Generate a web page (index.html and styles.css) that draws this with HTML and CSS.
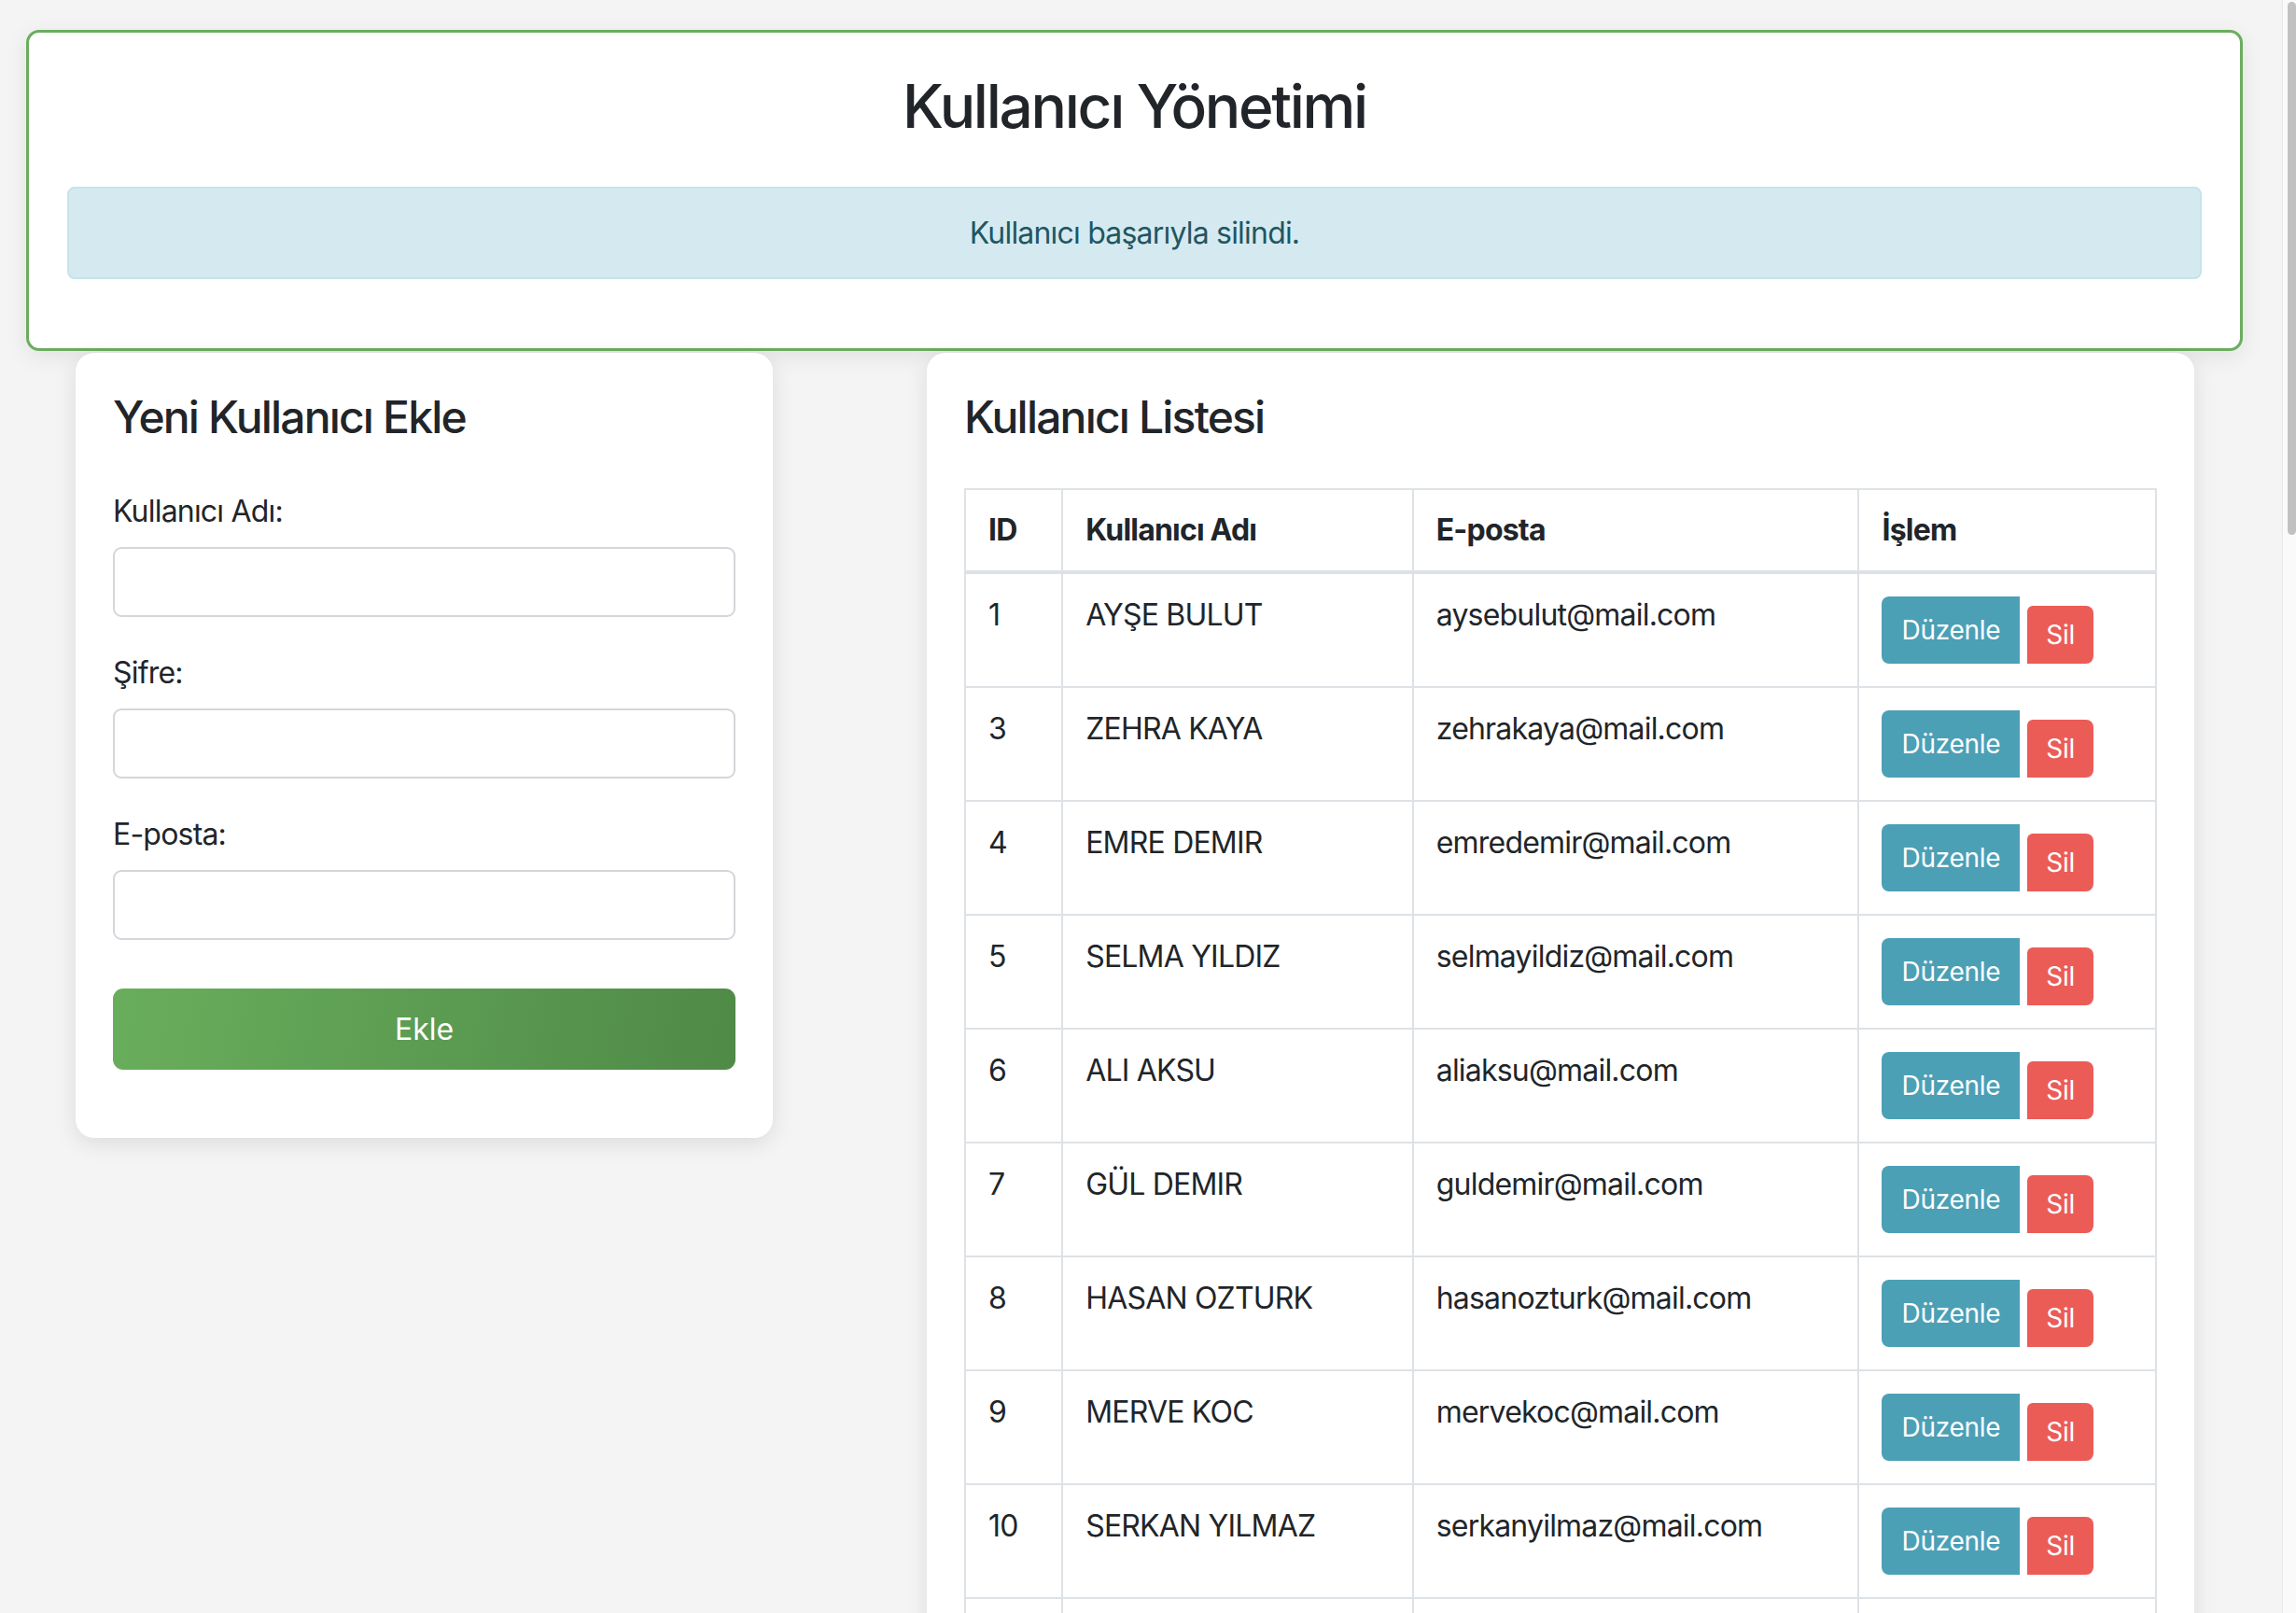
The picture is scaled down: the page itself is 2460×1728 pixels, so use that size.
FILE: index.html
```html
<!DOCTYPE html>
<html lang="tr">
<head>
<meta charset="utf-8">
<title>Kullanıcı Yönetimi</title>
<link rel="stylesheet" href="styles.css">
</head>
<body>
<div class="page">
  <header class="top-card">
    <h1 class="page-title">Kullanıcı Yönetimi</h1>
    <div class="alert">Kullanıcı başarıyla silindi.</div>
  </header>

  <main class="content">
    <section class="card form-card">
      <h3 class="card-title">Yeni Kullanıcı Ekle</h3>
      <form class="user-form">
        <div class="group">
          <label class="label">Kullanıcı Adı:</label>
          <input class="input" type="text">
        </div>
        <div class="group">
          <label class="label">Şifre:</label>
          <input class="input" type="password">
        </div>
        <div class="group last">
          <label class="label">E-posta:</label>
          <input class="input" type="email">
        </div>
        <button type="button" class="btn-add">Ekle</button>
      </form>
    </section>

    <section class="card list-card">
      <h3 class="card-title">Kullanıcı Listesi</h3>
      <table class="users">
        <colgroup>
          <col class="c-id"><col class="c-name"><col class="c-mail"><col class="c-act">
        </colgroup>
        <thead>
          <tr><th>ID</th><th>Kullanıcı Adı</th><th>E-posta</th><th>İşlem</th></tr>
        </thead>
        <tbody>
          <tr><td>1</td><td>AYŞE BULUT</td><td>aysebulut@mail.com</td><td><div class="actions"><a class="btn-edit">Düzenle</a><button class="btn-del">Sil</button></div></td></tr>
          <tr><td>3</td><td>ZEHRA KAYA</td><td>zehrakaya@mail.com</td><td><div class="actions"><a class="btn-edit">Düzenle</a><button class="btn-del">Sil</button></div></td></tr>
          <tr><td>4</td><td>EMRE DEMIR</td><td>emredemir@mail.com</td><td><div class="actions"><a class="btn-edit">Düzenle</a><button class="btn-del">Sil</button></div></td></tr>
          <tr><td>5</td><td>SELMA YILDIZ</td><td>selmayildiz@mail.com</td><td><div class="actions"><a class="btn-edit">Düzenle</a><button class="btn-del">Sil</button></div></td></tr>
          <tr><td>6</td><td>ALI AKSU</td><td>aliaksu@mail.com</td><td><div class="actions"><a class="btn-edit">Düzenle</a><button class="btn-del">Sil</button></div></td></tr>
          <tr><td>7</td><td>GÜL DEMIR</td><td>guldemir@mail.com</td><td><div class="actions"><a class="btn-edit">Düzenle</a><button class="btn-del">Sil</button></div></td></tr>
          <tr><td>8</td><td>HASAN OZTURK</td><td>hasanozturk@mail.com</td><td><div class="actions"><a class="btn-edit">Düzenle</a><button class="btn-del">Sil</button></div></td></tr>
          <tr><td>9</td><td>MERVE KOC</td><td>mervekoc@mail.com</td><td><div class="actions"><a class="btn-edit">Düzenle</a><button class="btn-del">Sil</button></div></td></tr>
          <tr><td>10</td><td>SERKAN YILMAZ</td><td>serkanyilmaz@mail.com</td><td><div class="actions"><a class="btn-edit">Düzenle</a><button class="btn-del">Sil</button></div></td></tr>
          <tr class="tail"><td></td><td></td><td></td><td></td></tr>
        </tbody>
      </table>
    </section>
  </main>
</div>
<div class="scrollbar"><div class="thumb"></div></div>
</body>
</html>
```

FILE: styles.css
```css
* { box-sizing: border-box; }
html, body { margin: 0; padding: 0; height: 100%; overflow: hidden; }
body {
  background: #f4f4f4;
  font-family: Inter, "Noto Sans", "Liberation Sans", sans-serif;
  font-size: 32px;
  letter-spacing: -0.025em;
  color: #212529;
}
.page {
  margin-right: 15px;
  padding-top: 32px;
}
.top-card {
  margin: 0 42px 0 28px;
  background: #fff;
  border: 3px solid #6aad5e;
  border-radius: 14px;
  padding: 41px;
  box-shadow: 0 6px 24px rgba(0,0,0,0.08);
}
.page-title {
  margin: 0 0 47px;
  text-align: center;
  font-size: 64px;
  font-weight: 500;
  line-height: 1.2;
  letter-spacing: -0.036em;
}
.alert {
  background: #d5eaf0;
  border: 2px solid #c6e3ea;
  border-radius: 8px;
  color: #1f5663;
  text-align: center;
  font-size: 32px;
  line-height: 47px;
  padding: 24px 40px;
  margin-bottom: 33px;
}
.content {
  display: flex;
  align-items: flex-start;
  gap: 165px;
  padding-left: 81px;
  margin-top: 2px;
}
.card {
  background: #fff;
  border-radius: 20px;
  padding: 40px;
  box-shadow: 0 6px 24px rgba(0,0,0,0.10);
}
.form-card { width: 747px; flex: none; }
.list-card { width: 1358px; flex: none; }
.card-title {
  margin: 0 0 43px;
  font-size: 48px;
  font-weight: 500;
  line-height: 1.2;
  letter-spacing: -0.038em;
}
.list-card .card-title { margin-bottom: 48px; }
.user-form { margin-bottom: 33px; }
.group { display: flex; flex-direction: column; margin-bottom: 30px; }
.group.last { margin-bottom: 0; }
.label {
  display: block;
  line-height: 48px;
  padding-top: 6px;
  margin-bottom: 14px;
}
.input {
  height: 75px;
  width: 100%;
  border: 2px solid #d3d6da;
  border-radius: 9px;
  background: #fff;
  font: inherit;
  padding: 0 20px;
}
.btn-add {
  display: block;
  width: 100%;
  height: 87px;
  margin-top: 52px;
  border: 0;
  border-radius: 11px;
  background: linear-gradient(100deg, #69ae5c 0%, #5c9c52 50%, #4f8a47 100%);
  color: #fff;
  font: inherit;
  font-size: 32px;
}
.users {
  width: 100%;
  table-layout: fixed;
  border-collapse: collapse;
  border: 2px solid #dee2e6;
}
.c-id { width: 104px; }
.c-name { width: 375px; }
.c-mail { width: 477px; }
.c-act { width: 318px; }
.users th, .users td {
  border: 2px solid #dee2e6;
  padding: 24px;
  text-align: left;
  vertical-align: top;
}
.users th {
  font-weight: 700;
  line-height: 38px;
  border-bottom-width: 4px;
}
.users td { line-height: 40px; }
.users .tail td { height: 120px; }
.actions { display: flex; align-items: flex-end; gap: 8px; }
.btn-edit {
  display: block;
  background: #4ba0b6;
  color: #fff;
  font-size: 28px;
  line-height: 42px;
  letter-spacing: -0.01em;
  padding: 15px 21px;
  border-radius: 8px 0 0 8px;
}
.btn-del {
  display: block;
  background: #eb5c57;
  color: #fff;
  border: 0;
  font: inherit;
  font-size: 28px;
  line-height: 42px;
  letter-spacing: -0.01em;
  padding: 10px 20px;
  border-radius: 6px 8px 8px 0;
}
.scrollbar {
  position: fixed;
  top: 0;
  right: 0;
  width: 15px;
  height: 100%;
  background: #fafafa;
  border-left: 1px solid #e8e8e8;
}
.thumb {
  position: absolute;
  top: 2px;
  right: 0;
  width: 9px;
  height: 571px;
  border-radius: 5px;
  background: #c1c1c1;
}
```
